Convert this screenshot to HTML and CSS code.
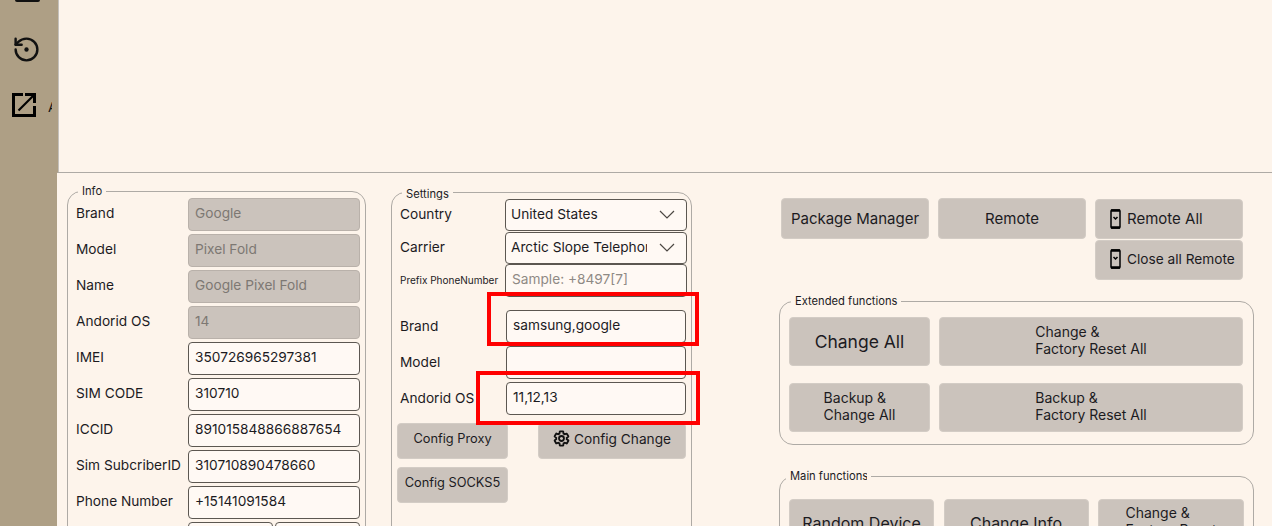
FILE: index.html
```html
<!DOCTYPE html>
<html lang="en">

<head>
    <meta charset="UTF-8">
    <meta name="viewport" content="width=device-width, initial-scale=1.0">
    <title>Device</title>

    <link rel="stylesheet" href="styles.css">
</head>

<body>
    <aside class="sidebar">
        <div class="icon-top"></div>
        <svg class="icon-restore" viewBox="0 0 24 24"><path d="M3 12a9 9 0 1 0 9-9 9.75 9.75 0 0 0-6.74 2.74L3 8" /><path d="M3 3v5h5" /><circle class="dot" cx="12" cy="12" r="1.8" /></svg>
        <svg class="icon-open" viewBox="0 0 24 24"><path d="M11 1.5H1.5v21h21V13" /><path d="M13 1.5h9.5V10" /><path class="thin" d="M22 2L6.500 17.500" /></svg>
        <span class="side-label">A</span>
    </aside>

    <main class="content">
        <div class="top-area"></div>

        <div class="panel-area">
            <fieldset class="group info">
                <legend>Info</legend>
                <div class="row"><label>Brand</label><input class="locked" value="Google" disabled></div>
                <div class="row"><label>Model</label><input class="locked" value="Pixel Fold" disabled></div>
                <div class="row"><label>Name</label><input class="locked" value="Google Pixel Fold" disabled></div>
                <div class="row"><label>Andorid OS</label><input class="locked" value="14" disabled></div>
                <div class="row"><label>IMEI</label><input value="350726965297381"></div>
                <div class="row"><label>SIM CODE</label><input value="310710"></div>
                <div class="row"><label>ICCID</label><input value="891015848866887654"></div>
                <div class="row"><label>Sim SubcriberID</label><input value="310710890478660"></div>
                <div class="row"><label>Phone Number</label><input value="+15141091584"></div>
                <div class="row"><label></label><div class="split"><input><input></div></div>
            </fieldset>

            <fieldset class="group settings">
                <legend>Settings</legend>
                <div class="set-row first-row"><label>Country</label>
                    <div class="select"><span>United States</span><svg viewBox="0 0 16 9"><path d="M1 1l7 7 7-7" /></svg></div>
                </div>
                <div class="set-row"><label>Carrier</label>
                    <div class="select"><span>Arctic Slope Telephone</span><svg viewBox="0 0 16 9"><path d="M1 1l7 7 7-7" /></svg></div>
                </div>
                <div class="set-row"><label class="tiny">Prefix PhoneNumber</label><input placeholder="Sample: +8497[7]"></div>
                <div class="set-row brand-row"><label>Brand</label><input class="narrow" value="samsung,google"></div>
                <div class="set-row model-row"><label>Model</label><input class="narrow"></div>
                <div class="set-row os-row"><label>Andorid OS</label><input class="narrow" value="11,12,13"></div>
                <div class="config-btns">
                    <div class="config-col">
                        <button class="btn config">Config Proxy</button>
                        <button class="btn config">Config SOCKS5</button>
                    </div>
                    <button class="btn config change">
                        <svg viewBox="0 0 24 24"><path d="M19.4 13c.04-.33.1-.66.1-1s-.06-.67-.1-1l2.1-1.600c.2-.15.25-.42.12-.64l-2-3.460c-.12-.22-.39-.3-.61-.22l-2.490 1c-.52-.4-1.080-.73-1.690-.98l-.38-2.650A.49.49 0 0 0 14 2h-4c-.25 0-.46.18-.49.42l-.38 2.650c-.61.25-1.170.59-1.690.98l-2.490-1c-.23-.09-.49 0-.61.22l-2 3.460c-.13.22-.07.49.12.64L4.600 11c-.04.33-.1.66-.1 1s.06.67.1 1l-2.100 1.600c-.2.15-.25.42-.12.64l2 3.460c.12.22.39.3.61.22l2.490-1c.52.4 1.080.73 1.690.98l.38 2.650c.03.24.24.42.49.42h4c.25 0 .46-.18.49-.42l.38-2.650c.61-.25 1.170-.59 1.690-.98l2.490 1c.23.09.49 0 .61-.22l2-3.460c.13-.22.07-.49-.12-.64L19.400 13zM12 15.500a3.500 3.500 0 1 1 0-7 3.500 3.500 0 0 1 0 7z" /></svg>
                        Config Change
                    </button>
                </div>
                <div class="highlight hl-brand"></div>
                <div class="highlight hl-os"></div>
            </fieldset>

            <section class="actions">
                <div class="top-btns">
                    <button class="btn big">Package Manager</button>
                    <button class="btn big">Remote</button>
                    <div class="remote-col">
                        <button class="btn remote remote-all">
                            <svg viewBox="0 0 11 20"><rect x="1" y="1" width="9" height="18" rx="1" /><path class="bars" d="M1 1.500h9M1 18.500h9" /><path d="M3.500 8l2 2 2-2" /></svg>
                            Remote All
                        </button>
                        <button class="btn remote close-all">
                            <svg viewBox="0 0 11 20"><rect x="1" y="1" width="9" height="18" rx="1" /><path class="bars" d="M1 1.500h9M1 18.500h9" /><path d="M3.500 8l2 2 2-2" /></svg>
                            Close all Remote
                        </button>
                    </div>
                </div>

                <fieldset class="group extended">
                    <legend>Extended functions</legend>
                    <div class="ext-grid">
                        <button class="btn large">Change All</button>
                        <button class="btn"><span class="two-line">Change &amp;<br>Factory Reset All</span></button>
                        <button class="btn"><span class="two-line">Backup &amp;<br>Change All</span></button>
                        <button class="btn"><span class="two-line">Backup &amp;<br>Factory Reset All</span></button>
                    </div>
                </fieldset>

                <fieldset class="group main-fn">
                    <legend>Main functions</legend>
                    <div class="main-grid">
                        <button class="btn large">Random Device</button>
                        <button class="btn large">Change Info</button>
                        <button class="btn"><span class="two-line">Change &amp;<br>Factory Reset</span></button>
                    </div>
                </fieldset>
            </section>
        </div>
    </main>
</body>

</html>
```

FILE: styles.css
```css
* {
    box-sizing: border-box;
}

body {
    margin: 0;
    height: 526px;
    overflow: hidden;
    display: flex;
    background: #fdf4eb;
    color: #1c1b1f;
    font-family: Inter, "Liberation Sans", sans-serif;
    font-size: 13.7px;
}

.sidebar {
    width: 57px;
    flex: none;
    background: #ae9f85;
    display: flex;
    flex-direction: column;
    position: relative;
}

.icon-top {
    width: 25px;
    height: 2px;
    margin-left: 15px;
    background: #111;
    border-radius: 0 0 5px 5px;
}

.icon-restore {
    display: block;
    width: 29px;
    height: 29px;
    margin: 33px 0 0 12px;
    fill: none;
    stroke: #111;
    stroke-width: 2;
    stroke-linecap: round;
    stroke-linejoin: round;
}

.icon-restore .dot {
    fill: #111;
    stroke: none;
}

.icon-open {
    display: block;
    width: 24px;
    height: 24px;
    margin: 29px 0 0 12px;
    fill: none;
    stroke: #000;
    stroke-width: 3;
}

.icon-open .thin {
    stroke-width: 2.200;
}

/* clipped label of the collapsed menu item */
.side-label {
    position: absolute;
    left: 48px;
    top: 99px;
    width: 4px;
    overflow: hidden;
    color: #111;
}

.content {
    flex: 1;
    min-width: 0;
    display: flex;
    flex-direction: column;
}

.top-area {
    height: 173px;
    flex: none;
    border-left: 1px solid #ae9f85;
    border-bottom: 1px solid #aeaaa5;
    box-shadow: inset 1px 0 #c4c0bb;
}

.panel-area {
    display: flex;
    align-items: flex-start;
    padding: 12px 0 0 10px;
}

.group {
    margin: 0;
    border: 1px solid #aeaaa5;
    border-radius: 14px;
    min-width: 0;
}

.group legend {
    font-size: 11.2px;
    line-height: 13px;
    padding: 0 4px;
    margin-left: 2px;
}

.info {
    width: 299px;
    height: 400px;
    padding: 0 5px 0 8px;
    flex: none;
}

.info legend {
    margin-bottom: -2px;
}

.row {
    display: flex;
    align-items: center;
    height: 36px;
}

.row label {
    width: 112px;
    flex: none;
    padding-bottom: 2px;
}

.row input {
    width: 172px;
}

.split {
    display: flex;
    gap: 2px;
}

.split input {
    width: 85px;
}

input {
    height: 33px;
    padding: 0 6px 3px;
    border: 1px solid #5c5751;
    border-radius: 4px;
    background: #fff9f4;
    font: inherit;
    color: #1c1b1f;
    outline: none;
}

input::placeholder {
    color: #8f8a85;
}

input.locked {
    background: #cbc3bc;
    border-color: #b9b1aa;
    color: #7d7873;
}

.settings {
    width: 301px;
    height: 400px;
    margin: -1px 0 0 25px;
    padding: 0 4px 0 8px;
    flex: none;
    position: relative;
}

.settings legend {
    padding-top: 4px;
}

.set-row {
    display: flex;
    align-items: center;
    height: 33px;
}

.first-row {
    margin-top: -3px;
}

.set-row label {
    width: 105px;
    flex: none;
    padding-bottom: 2px;
}

.set-row label.tiny {
    font-size: 10px;
}

.set-row input {
    width: 182px;
    height: 33px;
}

.set-row input.narrow {
    width: 180px;
    margin-left: 1px;
}

.brand-row {
    margin-top: 13px;
}

.model-row,
.os-row {
    margin-top: 3px;
}

.select {
    width: 182px;
    height: 32px;
    padding: 0 11px 1px 5px;
    border: 1px solid #5c5751;
    border-radius: 4px;
    background: #fff9f4;
    display: flex;
    align-items: center;
    justify-content: space-between;
}

.select span {
    width: 136px;
    white-space: nowrap;
    overflow: hidden;
}

.select svg {
    width: 16px;
    height: 9px;
    fill: none;
    stroke: #4c4843;
    stroke-width: 1.200;
}

.btn {
    border: 1px solid #d3ccc5;
    border-radius: 4px;
    background: #cbc3bc;
    color: #1c1b1f;
    font: inherit;
    display: flex;
    align-items: center;
    justify-content: center;
    padding: 0;
}

.config-btns {
    display: flex;
    justify-content: space-between;
    margin: 8px 0 0 -3px;
    width: 289px;
}

.config-col {
    display: flex;
    flex-direction: column;
    gap: 8px;
}

.config {
    width: 111px;
    height: 36px;
    font-size: 12.800px;
    padding-bottom: 5px;
}

.config.change {
    width: 148px;
    gap: 4px;
    font-size: 13.700px;
}

.change svg {
    width: 17px;
    height: 17px;
    fill: none;
    stroke: #111;
    stroke-width: 2.600;
}

.highlight {
    position: absolute;
    border: 4px solid #f00;
    pointer-events: none;
}

.hl-brand {
    left: 95px;
    top: 91px;
    width: 212px;
    height: 54px;
}

.hl-os {
    left: 84px;
    top: 170px;
    width: 224px;
    height: 54px;
}

.actions {
    margin-left: 87px;
    width: 475px;
    flex: none;
}

.top-btns {
    display: flex;
    gap: 9px;
    margin: 13px 0 0 2px;
    align-items: flex-start;
}

.big {
    width: 148px;
    height: 41px;
    font-size: 15px;
}

.remote-col {
    display: flex;
    flex-direction: column;
    gap: 1px;
    margin-top: 1px;
}

.remote {
    width: 148px;
    height: 40px;
    justify-content: flex-start;
    gap: 6px;
    padding-left: 14px;
}

.remote svg {
    width: 11px;
    height: 20px;
    flex: none;
    fill: none;
    stroke: #000;
    stroke-width: 1.500;
}

.remote .bars {
    stroke-width: 2.400;
}

.remote-all {
    font-size: 15px;
    padding-bottom: 1px;
}

.close-all {
    padding-bottom: 3px;
}

.extended {
    width: 475px;
    height: 150px;
    margin-top: 15px;
    padding: 0 9px;
}

.ext-grid {
    display: grid;
    grid-template-columns: 141px 304px;
    grid-template-rows: 49px 49px;
    gap: 17px 9px;
    margin-top: 9px;
}

.two-line {
    display: block;
    text-align: left;
    line-height: 17px;
    font-size: 14px;
    padding-bottom: 3px;
}

.large {
    font-size: 17.500px;
}

.main-fn {
    width: 475px;
    height: 90px;
    margin-top: 25px;
    padding: 0 0 0 9px;
}

/* the label box is too narrow for the text, last letter gets cut */
.main-fn legend {
    width: 85px;
    margin-left: -3px;
    padding: 0;
    border: solid transparent;
    border-width: 0 4px;
    white-space: nowrap;
    overflow: hidden;
}

.main-grid {
    display: grid;
    grid-template-columns: 145px 145px 146px;
    grid-template-rows: 47px;
    gap: 9.500px;
    margin-top: 16px;
}

.main-grid .large {
    font-size: 16px;
}
```
